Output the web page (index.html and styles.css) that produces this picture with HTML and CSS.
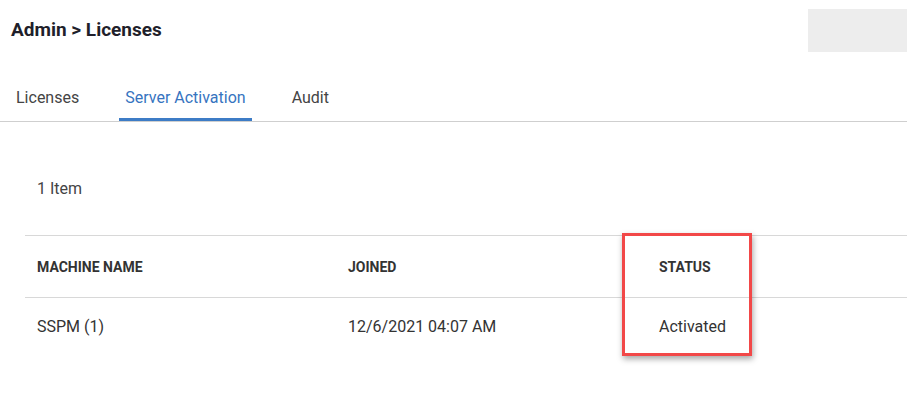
FILE: index.html
```html
<!DOCTYPE html>
<html>
<head>
<meta charset="utf-8">
<link rel="stylesheet" href="styles.css">
</head>
<body>
<div class="page">
  <header class="top">
    <h1 class="crumb">Admin <span class="sep">&gt;</span> Licenses</h1>
    <div class="placeholder"></div>
  </header>
  <nav class="tabs">
    <a class="tab">Licenses</a>
    <a class="tab active">Server Activation</a>
    <a class="tab">Audit</a>
  </nav>
  <main class="content">
    <div class="count">1 Item</div>
    <div class="table-wrap">
      <table class="grid">
        <thead>
          <tr><th class="c1">MACHINE NAME</th><th class="c2">JOINED</th><th>STATUS</th></tr>
        </thead>
        <tbody>
          <tr><td>SSPM (1)</td><td>12/6/2021 04:07 AM</td><td>Activated</td></tr>
        </tbody>
      </table>
      <div class="highlight"></div>
    </div>
  </main>
</div>
</body>
</html>
```
FILE: styles.css
```css
* { box-sizing: border-box; }
html, body { margin: 0; padding: 0; background: #fff; }
body { font-family: Roboto, "Liberation Sans", sans-serif; color: #333; }
.page { width: 907px; height: 400px; overflow: hidden; }
.top { display: flex; justify-content: space-between; align-items: flex-start; height: 74px; }
.crumb { margin: 19px 0 0 11px; font-size: 19px; font-weight: 700; color: #1f1f2b; line-height: 22px; }
.sep { font-weight: 700; }
.placeholder { width: 99px; height: 43px; margin-top: 9px; background: #ededed; }
.tabs { display: flex; border-bottom: 1px solid #cfcfcf; height: 48px; padding-left: 10px; }
.tab { padding: 14px 6px 0; font-size: 16px; color: #444; height: 47px; line-height: 20px; margin-right: 34px; }
.tab.active { color: #3674bf; border-bottom: 3px solid #3d7cc6; }
.content { padding: 0 0 0 25px; }
.count { font-size: 16px; color: #444; padding: 57px 0 0 12px; line-height: 20px; height: 113px; }
.table-wrap { position: relative; }
.grid { width: 882px; border-collapse: collapse; font-size: 16px; }
.grid th { text-align: left; font-size: 14px; font-weight: 700; color: #333; padding: 0 12px; height: 62px; border-top: 1px solid #d8d8d8; border-bottom: 1px solid #d8d8d8; }
.grid th.c1, .grid th.c2 { width: 311px; }
.grid td { padding: 0 12px; height: 58px; color: #333; }
.highlight { position: absolute; left: 597px; top: -2px; width: 130px; height: 123px; border: 3px solid #f24848; box-shadow: 1px 3px 6px rgba(0,0,0,0.35); }
```
